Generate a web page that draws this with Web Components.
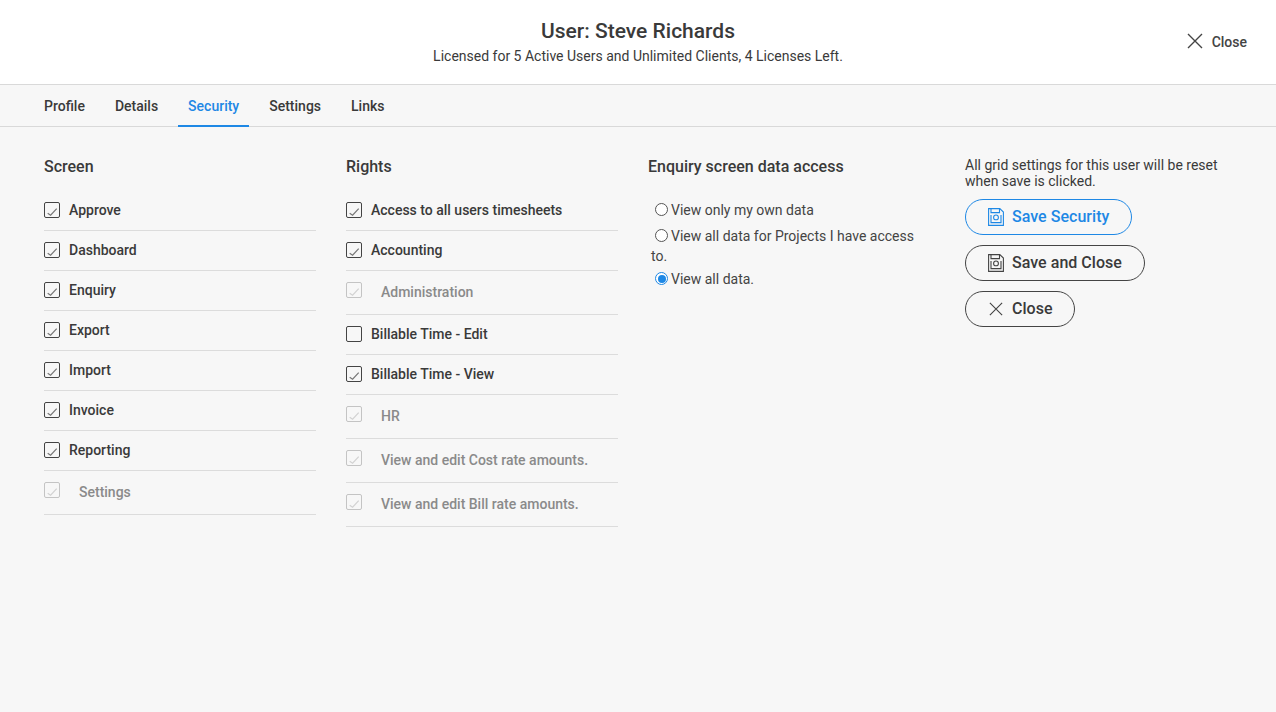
<!DOCTYPE html>
<html><head><meta charset="utf-8"><style>
html,body{margin:0;padding:0;height:100%;}
body{background:#f7f7f7;font-family:Roboto,sans-serif;color:#3a3a3a;overflow:hidden;}
</style></head><body>
<u-page></u-page>
<script>
const X=(s,sw=1.4)=>`<svg width="${s}" height="${s}" viewBox="0 0 16 16" fill="none" stroke="currentColor" stroke-width="${sw}"><path d="M1 1L15 15M15 1L1 15"/></svg>`;
const SAVE=`<svg width="16" height="18" viewBox="0 0 16 18" fill="none" stroke="currentColor" stroke-width="1.1"><path d="M.6 .6H11.8L15.4 4V17.4H.6Z"/><path d="M3 .6V4.6H11.5V.6"/><circle cx="8" cy="9.4" r="2.4"/><path d="M3 7V14.6H13V7"/></svg>`;
class UCheck extends HTMLElement{
 connectedCallback(){
  const d=this.hasAttribute('disabled'),c=this.hasAttribute('checked');
  this.attachShadow({mode:'open'}).innerHTML=`<style>
  :host{display:flex;align-items:center;box-sizing:border-box;height:${d?44:40}px;border-bottom:1px solid #dcdcdc;font-size:14px;font-weight:500;color:${d?'#8a8a8a':'#3a3a3a'};padding-bottom:${d?2:1}px}
  .b{width:14px;height:14px;border:1px solid ${d?'#c4c4c4':'#444'};border-radius:2px;display:flex;flex:none;position:relative;top:${d?-2:0}px}
  svg{display:block}
  .t{margin-left:${d?19:9}px}
  </style><span class="b">${c?`<svg width="14" height="14" viewBox="0 0 14 14" fill="none" stroke="${d?'#d2d2d2':'#777'}" stroke-width="1.2"><path d="M2.7 10.2L5.6 12.2L11.7 5.6"/></svg>`:''}</span><span class="t"><slot></slot></span>`;
 }
}
class URadio extends HTMLElement{
 connectedCallback(){
  const c=this.hasAttribute('checked');
  this.attachShadow({mode:'open'}).innerHTML=`<style>
  :host{display:block;font-size:14px;line-height:20px;color:#444}
  .r{display:inline-block;box-sizing:border-box;width:13px;height:13px;border-radius:50%;border:1px solid ${c?'#1e88e5':'#555'};margin:0 3px 0 4px;vertical-align:-1px;position:relative;background:#fff}
  .r i{position:absolute;inset:1.5px;border-radius:50%;background:${c?'#1e88e5':'transparent'}}
  </style><span class="r"><i></i></span><slot></slot>`;
 }
}
class UButton extends HTMLElement{
 connectedCallback(){
  const col=this.getAttribute('color')||'#3a3a3a',ic=this.getAttribute('icon'),dark=!this.getAttribute('color');
  this.attachShadow({mode:'open'}).innerHTML=`<style>
  :host{display:flex;box-sizing:border-box;width:${this.getAttribute('w')}px;height:36px;align-items:center;border:1px solid ${dark?'#444':col};border-radius:18px;color:${col};font-size:16px;font-weight:500;padding:0 0 2px ${ic==='x'?23:22}px;letter-spacing:.03px}
  .i{display:flex;position:relative;top:1px;width:${ic==='x'?14:16}px;margin-right:${ic==='x'?9:8}px;color:${dark?'#444':col}}
  </style><span class="i">${ic==='x'?X(14,1.3):SAVE}</span><slot></slot>`;
 }
}
class UTabs extends HTMLElement{
 connectedCallback(){
  this.attachShadow({mode:'open'}).innerHTML=`<style>
  :host{display:flex;align-items:flex-start;box-sizing:border-box;height:42px;padding-left:34px;gap:10px;border-bottom:1px solid #d9d9d9;background:#f7f7f7}
  .t{box-sizing:border-box;height:42px;padding:0 10px;display:flex;align-items:center;font-size:14px;font-weight:500;color:#3a3a3a}
  .a{color:#1e88e5;border-bottom:2px solid #1e88e5;padding-top:2px}
  </style><span class="t">Profile</span><span class="t">Details</span><span class="t a">Security</span><span class="t">Settings</span><span class="t">Links</span>`;
 }
}
class UHeader extends HTMLElement{
 connectedCallback(){
  this.attachShadow({mode:'open'}).innerHTML=`<style>
  :host{display:flex;flex-direction:column;align-items:center;box-sizing:border-box;height:85px;background:#fff;border-bottom:1px solid #d9d9d9;padding-top:18px;position:relative}
  h1{margin:0;font-size:21px;font-weight:500;line-height:26px;color:#3a3a3a}
  p{margin:2px 0 0;font-size:14px;line-height:20px;color:#3a3a3a}
  .c{position:absolute;right:29px;top:33px;display:flex;align-items:center;gap:9px;font-size:14px;font-weight:500;color:#444}
  .c svg{margin-bottom:2px}
  </style><h1>User: Steve Richards</h1><p>Licensed for 5 Active Users and Unlimited Clients, 4 Licenses Left.</p><div class="c">${X(16,1.4)}<span>Close</span></div>`;
 }
}
class UCol extends HTMLElement{
 connectedCallback(){
  this.attachShadow({mode:'open'}).innerHTML=`<style>
  :host{display:flex;flex-direction:column}
  h2{margin:0 0 12px;font-size:16px;font-weight:500;line-height:24px;color:#3a3a3a;height:24px}
  </style><h2>${this.getAttribute('title')}</h2><slot></slot>`;
 }
}
class UPage extends HTMLElement{
 connectedCallback(){
  this.attachShadow({mode:'open'}).innerHTML=`<style>
  :host{display:block}
  main{display:grid;grid-template-columns:272px 272px 287px 280px;column-gap:30px;padding:28px 0 0 44px;align-items:start}
  .radios{display:flex;flex-direction:column;padding-top:9px;width:272px;margin-left:3px}
  .g1{margin-bottom:6px}.g2{margin-bottom:3px}
  .note{font-size:14px;line-height:16px;color:#3a3a3a;margin:2px 0 10px}
  .btns{display:flex;flex-direction:column;gap:10px;align-items:flex-start}
  </style>
  <u-header></u-header><u-tabs></u-tabs>
  <main>
   <u-col title="Screen">
    <u-check checked>Approve</u-check><u-check checked>Dashboard</u-check><u-check checked>Enquiry</u-check><u-check checked>Export</u-check><u-check checked>Import</u-check><u-check checked>Invoice</u-check><u-check checked>Reporting</u-check><u-check checked disabled>Settings</u-check>
   </u-col>
   <u-col title="Rights">
    <u-check checked>Access to all users timesheets</u-check><u-check checked>Accounting</u-check><u-check checked disabled>Administration</u-check><u-check>Billable Time - Edit</u-check><u-check checked>Billable Time - View</u-check><u-check checked disabled>HR</u-check><u-check checked disabled>View and edit Cost rate amounts.</u-check><u-check checked disabled>View and edit Bill rate amounts.</u-check>
   </u-col>
   <u-col title="Enquiry screen data access">
    <div class="radios"><u-radio class="g1">View only my own data</u-radio><u-radio class="g2">View all data for Projects I have access to.</u-radio><u-radio checked>View all data.</u-radio></div>
   </u-col>
   <div>
    <div class="note">All grid settings for this user will be reset<br>when save is clicked.</div>
    <div class="btns"><u-button w="167" icon="save" color="#1e88e5">Save Security</u-button><u-button w="180" icon="save">Save and Close</u-button><u-button w="110" icon="x">Close</u-button></div>
   </div>
  </main>`;
 }
}
customElements.define('u-check',UCheck);customElements.define('u-radio',URadio);customElements.define('u-button',UButton);customElements.define('u-tabs',UTabs);customElements.define('u-header',UHeader);customElements.define('u-col',UCol);customElements.define('u-page',UPage);
</script>
</body></html>
